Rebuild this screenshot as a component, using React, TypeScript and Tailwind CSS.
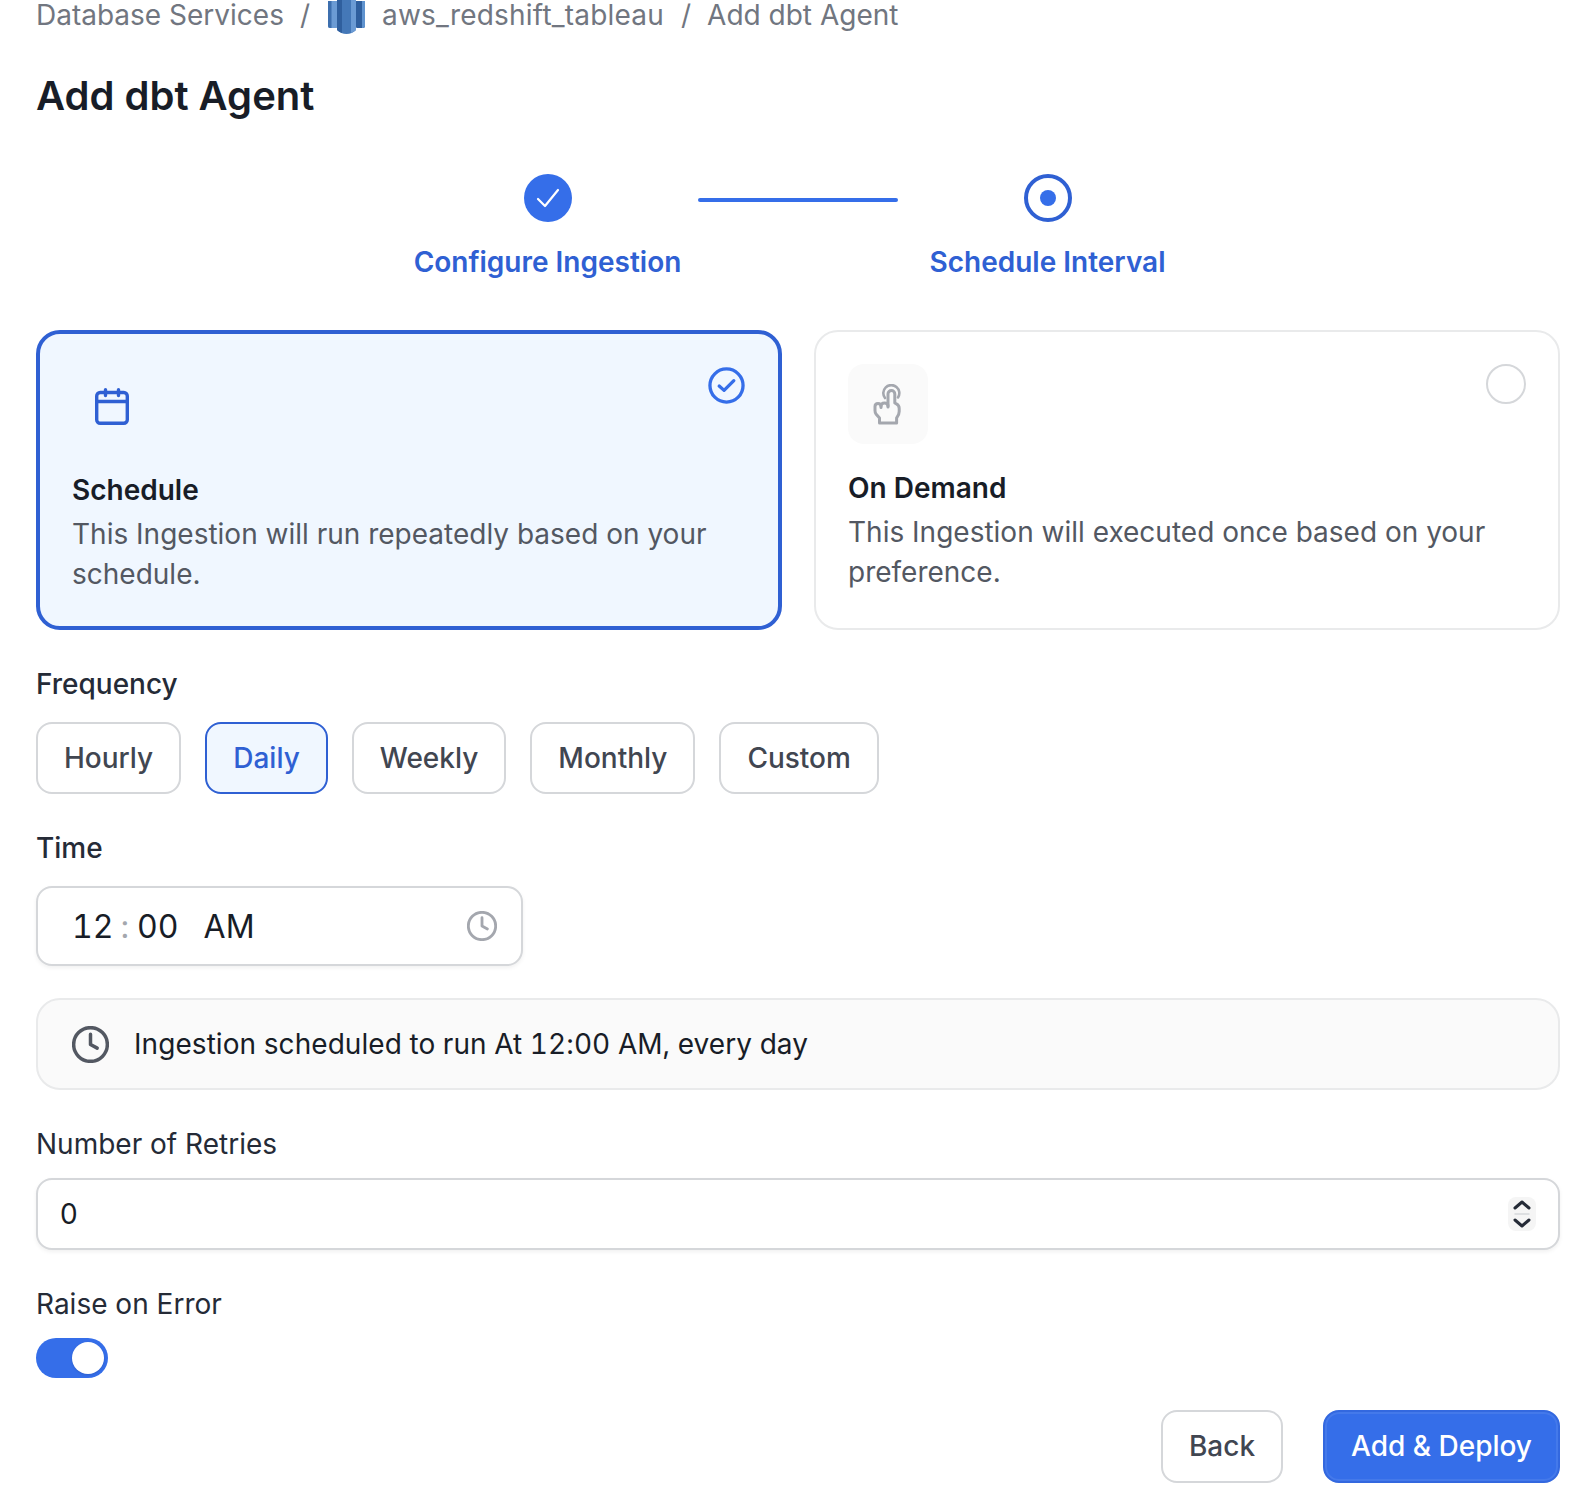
const frequencies = ["Hourly", "Daily", "Weekly", "Monthly", "Custom"];

const RedshiftLogo = () => (
  <svg width="37" height="34" viewBox="0 0 37 34" className="shrink-0">
    <path d="M0 1 H9 V27.5 Q9 28 8 28 H2 Q0 28 0 26 Z" fill="#6b9bd4" />
    <path d="M0 1 H3.5 V28 H2 Q0 28 0 26 Z" fill="#3d6fae" />
    <path d="M28 1 H37 V26 Q37 28 35 28 H29 Q28 28 28 27 Z" fill="#2f5f9e" />
    <path d="M34 1 H37 V26 Q37 28 35 28 H34 Z" fill="#5f93cf" />
    <path d="M9 0 H28 V30 Q24 34 18.500 34 Q13 34 9 30 Z" fill="#4478b8" />
    <path d="M9 0 H14 V33 Q11 32 9 30 Z" fill="#2f5f9e" />
    <path d="M23 0 H28 V30 Q26 32 23 33 Z" fill="#6b9bd4" />
  </svg>
);

const HandIcon = () => (
  <svg width="28" height="41" viewBox="-1 -1 28 41" fill="none" stroke="#a4a7ae" strokeWidth="3" strokeLinecap="round" strokeLinejoin="round" className="mr-[3px]">
    <path d="M14 22 V9 a3.4 3.4 0 0 1 6.800 0 V18 l1.600 .8 q2.800 1.400 2.800 4.600 v3 q0 3.400 -2.600 6.600 v5 H5.500 v-5 L2 29 q-1 -1.600 -1 -3.500 v-4 q0 -3 3 -3 t3 3 v1" />
    <path d="M7 21 q0 -3 3.500 -3 t3.500 3" />
    <path d="M11 13 a8 8 0 1 1 13 -.5" strokeWidth="2.600" />
  </svg>
);

const ClockIcon = ({ size, color, width }: { size: number; color: string; width: number }) => (
  <svg width={size} height={size} viewBox="0 0 36 36" fill="none" stroke={color} strokeWidth={width} strokeLinecap="round" strokeLinejoin="round">
    <circle cx="18" cy="18" r="16.400" />
    <path d="M18 8 V18 L24.500 21.500" />
  </svg>
);

export default function App() {
  return (
    <div className="min-h-[1506px] overflow-hidden bg-white pl-[36px] pr-[30px] font-['Inter',sans-serif] text-[28px] leading-[40px] text-[#181d27]">
      <nav className="flex h-[30px] items-center whitespace-nowrap leading-[30px] text-[#717680]">
        <span>Database Services</span>
        <span className="ml-[16px]">/</span>
        <span className="ml-[18px] flex h-[30px] items-start">
          <RedshiftLogo />
        </span>
        <span className="ml-[17px] tracking-[0.2px]">aws_redshift_tableau</span>
        <span className="ml-[17px]">/</span>
        <span className="ml-[16px]">Add dbt Agent</span>
      </nav>

      <h1 className="mt-[38px] text-[40px] font-semibold leading-[56px]">Add dbt Agent</h1>

      <div className="ml-[378px] mt-[50px] flex">
        <div className="flex w-[267px] flex-col items-center">
          <div className="flex h-[48px] w-[48px] items-center justify-center rounded-full bg-[#356ee9]">
            <svg width="24" height="24" viewBox="0 0 24 24" fill="none" stroke="white" strokeWidth="2.200" strokeLinecap="round" strokeLinejoin="round">
              <path d="M2 13 L9 20 L22 4" />
            </svg>
          </div>
          <span className="mt-[20px] whitespace-nowrap font-semibold text-[#2f60d3]">Configure Ingestion</span>
        </div>
        <div className="ml-[17px] mt-[24px] h-[4px] w-[200px] rounded-full bg-[#356ee9]" />
        <div className="ml-[32px] flex w-[235px] flex-col items-center">
          <div className="flex h-[48px] w-[48px] items-center justify-center rounded-full border-[4px] border-[#2f60d3]">
            <div className="h-[16px] w-[16px] rounded-full bg-[#356ee9]" />
          </div>
          <span className="mt-[20px] whitespace-nowrap font-semibold text-[#2f60d3]">Schedule Interval</span>
        </div>
      </div>

      <div className="mt-[48px] grid grid-cols-2 gap-[32px]">
        <div className="relative h-[300px] rounded-[24px] border-[4px] border-[#2f60d3] bg-[#f0f7ff] p-[32px]">
          <div className="flex h-[80px] w-[80px] items-center justify-center">
            <svg width="34" height="37" viewBox="0 0 34 37" fill="none" stroke="#2f60d3" strokeWidth="3.400" strokeLinecap="round" strokeLinejoin="round">
              <rect x="1.700" y="4.500" width="30.600" height="30.800" rx="3.500" />
              <path d="M1.700 13.500 H32.300 M10.500 1.700 V7.500 M23.500 1.700 V7.500" />
            </svg>
          </div>
          <svg className="absolute right-[33px] top-[33px]" width="37" height="37" viewBox="0 0 38 38" fill="none" stroke="#356ee9" strokeWidth="3.400" strokeLinecap="round" strokeLinejoin="round">
            <circle cx="19" cy="19" r="17" />
            <path d="M11.500 19.500 L16.500 24 L26.500 14" />
          </svg>
          <h3 className="mt-[24px] font-semibold">Schedule</h3>
          <p className="mt-[4px] text-[#535862]">This Ingestion will run repeatedly based on your schedule.</p>
        </div>
        <div className="relative h-[300px] rounded-[24px] border-[2px] border-[#e9eaeb] bg-white p-[32px]">
          <div className="flex h-[80px] w-[80px] items-center justify-center rounded-[16px] bg-[#fafafa]">
            <HandIcon />
          </div>
          <div className="absolute right-[32px] top-[32px] h-[40px] w-[40px] rounded-full border-[2px] border-[#d5d7da]" />
          <h3 className="mt-[24px] font-semibold">On Demand</h3>
          <p className="mt-[4px] text-[#535862]">This Ingestion will executed once based on your preference.</p>
        </div>
      </div>

      <label className="mt-[34px] block font-medium text-[#252b37]">Frequency</label>
      <div className="mt-[18px] flex gap-[24px]">
        {frequencies.map((f) =>
          f === "Daily" ? (
            <button key={f} className="h-[72px] rounded-[16px] border-[2px] border-[#2f60d3] bg-[#f0f7ff] px-[26px] font-medium text-[#2f60d3]">
              {f}
            </button>
          ) : (
            <button key={f} className="h-[72px] rounded-[16px] border-[2px] border-[#d5d7da] bg-white px-[26px] font-medium text-[#414651]">
              {f}
            </button>
          ),
        )}
      </div>

      <label className="mt-[34px] block font-medium text-[#252b37]">Time</label>
      <div className="mt-[18px] flex h-[80px] w-[487px] items-center justify-between rounded-[16px] border-[2px] border-[#d5d7da] bg-white pl-[34px] pr-[24px] text-[32px] tabular-nums shadow-[0_2px_4px_rgba(10,13,18,0.06)]">
        <div className="mt-[2px] flex">
          <span>12</span>
          <span className="ml-[7px] text-[#a4a7ae]">:</span>
          <span className="ml-[8px]">00</span>
          <span className="ml-[25px]">AM</span>
        </div>
        <ClockIcon size={30} color="#a4a7ae" width={3.400} />
      </div>

      <div className="mt-[32px] flex h-[92px] items-center rounded-[24px] border-[2px] border-[#e9eaeb] bg-[#fafafa] pl-[34px]">
        <ClockIcon size={37} color="#535862" width={3.400} />
        <span className="ml-[25px] tracking-[0.06px] tabular-nums">Ingestion scheduled to run At 12:00 AM, every day</span>
      </div>

      <label className="mt-[34px] block text-[#252b37]">Number of Retries</label>
      <div className="mt-[14px] flex h-[72px] items-center justify-between rounded-[16px] border-[2px] border-[#d5d7da] bg-white pl-[22px] pr-[22px] shadow-[0_2px_4px_rgba(10,13,18,0.06)]">
        <span>0</span>
        <div className="flex h-[34px] w-[28px] flex-col items-center justify-center rounded-[8px] bg-[#f5f5f5]">
          <svg width="18" height="30" viewBox="0 0 18 30" fill="none" stroke="#252b37" strokeWidth="3" strokeLinecap="round" strokeLinejoin="round">
            <path d="M2 9 L9 3 L16 9" />
            <path d="M2 15 H16" stroke="#d5d7da" strokeWidth="1.400" />
            <path d="M2 21 L9 27 L16 21" />
          </svg>
        </div>
      </div>

      <label className="mt-[34px] block text-[#252b37]">Raise on Error</label>
      <div className="mt-[14px] flex h-[40px] w-[72px] items-center justify-end rounded-full bg-[#356ee9] pr-[4px]">
        <div className="h-[32px] w-[32px] rounded-full bg-white shadow-sm" />
      </div>

      <div className="mt-[32px] flex justify-end gap-[40px]">
        <button className="h-[73px] w-[122px] rounded-[16px] border-[2px] border-[#d5d7da] bg-white pb-[2px] font-medium text-[#414651]">Back</button>
        <button className="h-[73px] w-[237px] rounded-[16px] border-[2px] border-[#3368df] bg-[#356ee9] pb-[2px] font-medium text-white shadow-[inset_0_0_0_2px_rgba(255,255,255,0.08)]">Add &amp; Deploy</button>
      </div>
    </div>
  );
}
